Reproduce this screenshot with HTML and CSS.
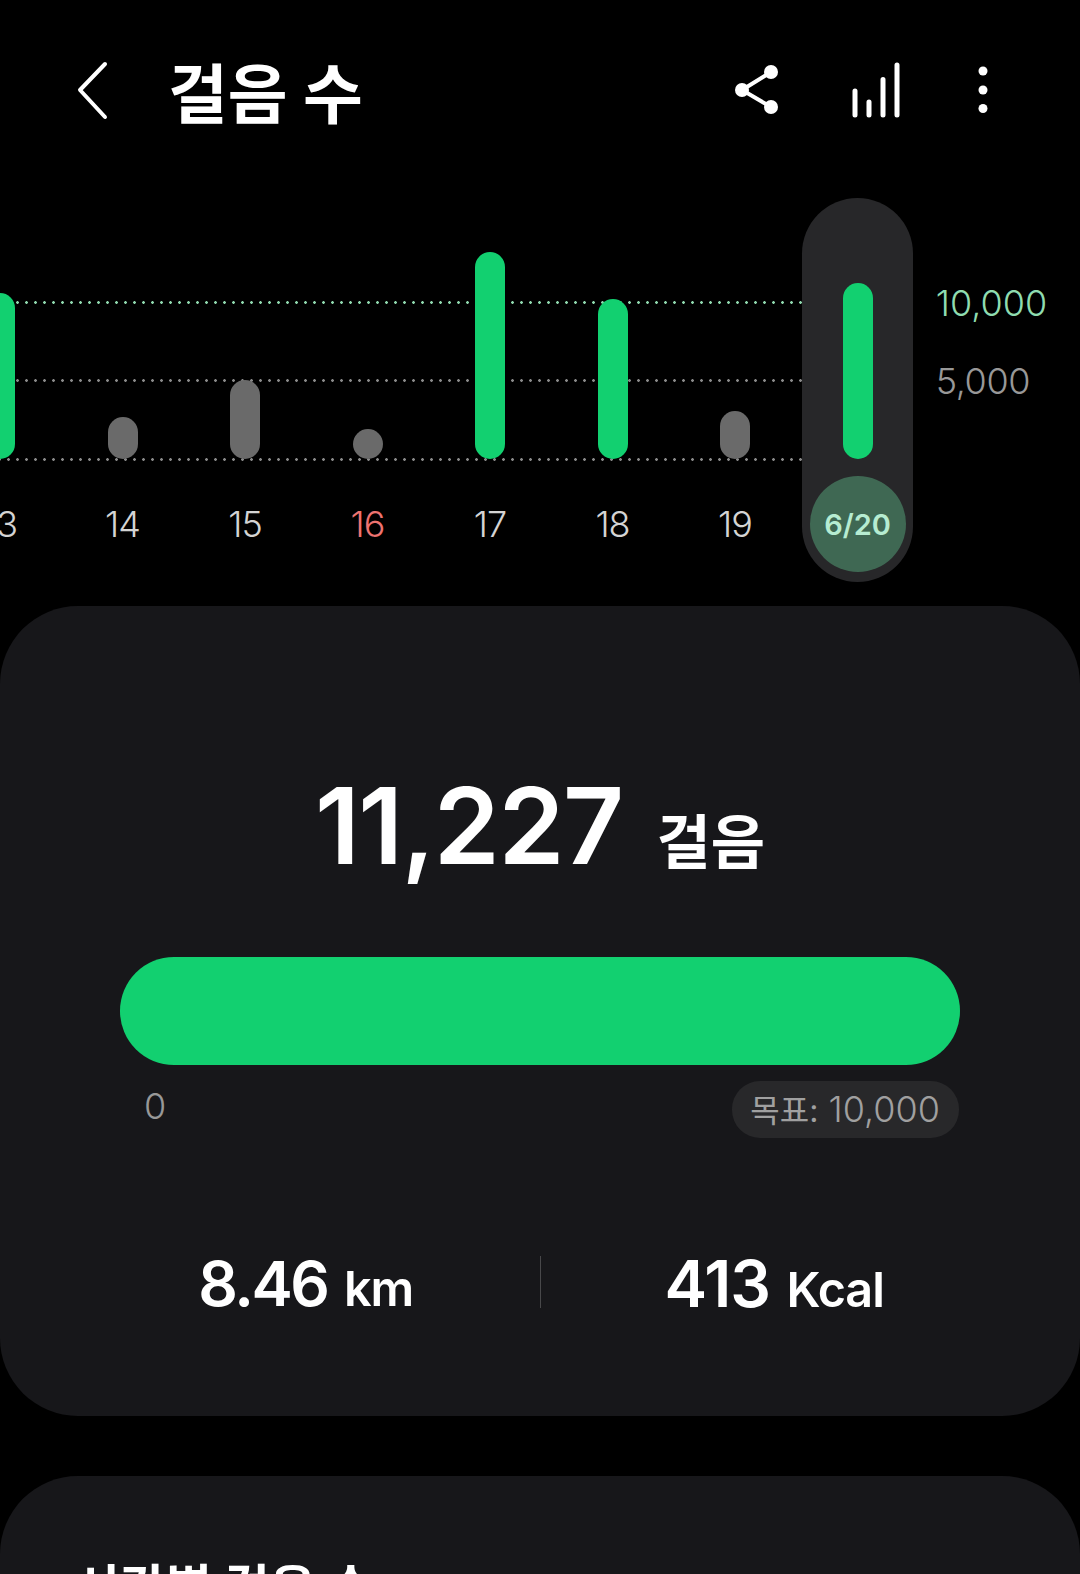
FILE: index.html
```html
<html>
    <head>
        <meta charset="utf-8">
        <title>걸음 수</title>
        <link rel="stylesheet" href="styles.css">
    </head>
    <body>
        <!-- 상단 바 -->
        <div class="top-bar">
            <svg class="icon-back" width="40" height="70" viewBox="0 0 40 70">
                <path d="M31 9 L6 35 L31 62" fill="none" stroke="#fff" stroke-width="4" stroke-linecap="round" stroke-linejoin="round"/>
            </svg>
            <h1 class="title">걸음 수</h1>
            <div class="actions">
                <svg width="48" height="56" viewBox="0 0 48 56">
                    <path d="M37 10 L8 28 L37 45" fill="none" stroke="#fff" stroke-width="4"/>
                    <circle cx="37" cy="10" r="7" fill="#fff"/>
                    <circle cx="8" cy="28" r="7" fill="#fff"/>
                    <circle cx="37" cy="45" r="7" fill="#fff"/>
                </svg>
                <svg width="50" height="56" viewBox="0 0 50 56">
                    <path d="M4 29 V53 M18 40 V53 M32 17.500 V53 M46 3 V53" fill="none" stroke="#fff" stroke-width="5" stroke-linecap="round"/>
                </svg>
                <svg class="icon-more" width="10" height="56" viewBox="0 0 10 56">
                    <circle cx="5" cy="9" r="4.500" fill="#fff"/>
                    <circle cx="5" cy="28" r="4.500" fill="#fff"/>
                    <circle cx="5" cy="46.500" r="4.500" fill="#fff"/>
                </svg>
            </div>
        </div>

        <!-- 주간 차트 -->
        <div class="chart">
            <div class="grid-line line-goal"></div>
            <div class="grid-line line-mid"></div>
            <div class="grid-line line-base"></div>
            <div class="days">
                <div class="day">
                    <div class="bar-area"><div class="bar bar-green" style="height:166px"></div></div>
                    <div class="day-label">13</div>
                </div>
                <div class="day">
                    <div class="bar-area"><div class="bar bar-gray" style="height:42px"></div></div>
                    <div class="day-label">14</div>
                </div>
                <div class="day">
                    <div class="bar-area"><div class="bar bar-gray" style="height:79px"></div></div>
                    <div class="day-label">15</div>
                </div>
                <div class="day">
                    <div class="bar-area"><div class="bar bar-gray" style="height:30px"></div></div>
                    <div class="day-label sunday">16</div>
                </div>
                <div class="day">
                    <div class="bar-area"><div class="bar bar-green" style="height:207px"></div></div>
                    <div class="day-label">17</div>
                </div>
                <div class="day">
                    <div class="bar-area"><div class="bar bar-green" style="height:160px"></div></div>
                    <div class="day-label">18</div>
                </div>
                <div class="day">
                    <div class="bar-area"><div class="bar bar-gray" style="height:48px"></div></div>
                    <div class="day-label">19</div>
                </div>
                <div class="day day-selected">
                    <div class="bar-area"><div class="bar bar-green" style="height:176px"></div></div>
                    <div class="day-label date-badge">6/20</div>
                </div>
            </div>
            <div class="axis">
                <div class="axis-goal">10,000</div>
                <div class="axis-mid">5,000</div>
            </div>
        </div>

        <!-- 오늘 걸음 카드 -->
        <div class="card card-today">
            <div class="count">
                <span class="count-num">11,227</span>
                <span class="count-unit">걸음</span>
            </div>
            <div class="progress"></div>
            <div class="progress-labels">
                <span class="zero">0</span>
                <span class="goal-pill"><span class="goal-word">목표:</span> 10,000</span>
            </div>
            <div class="stats">
                <div class="stat"><span class="stat-num stat-km">8.46</span> <span class="stat-unit">km</span></div>
                <div class="stat-line"></div>
                <div class="stat"><span class="stat-num">413</span> <span class="stat-unit">Kcal</span></div>
            </div>
        </div>

        <!-- 시간별 카드 -->
        <div class="card card-hourly">
            <h2 class="card-title">시간별 걸음 수</h2>
        </div>
    </body>
</html>
```

FILE: styles.css
```css
*{
    margin: 0;
    padding: 0;
    box-sizing: border-box;
}
html, body{
    width: 1080px;
    height: 1574px;
    overflow: hidden;
}
body{
    background-color: #000;
    color: #fff;
    font-family: Inter, "Noto Sans CJK KR", sans-serif;
}
/* 상단 바 */
.top-bar{
    display: flex;
    align-items: center;
    height: 180px;
    padding: 0 0 0 74px;
}
.icon-back{
    margin-right: 54px;
}
.title{
    font-size: 65px;
    font-weight: 700;
    line-height: 70px;
    margin-top: 10px;
}
.actions{
    display: flex;
    align-items: center;
    gap: 69px;
    margin-left: auto;
    padding-right: 92px;
}
.icon-more{
    margin-left: 8px;
}
/* 차트 */
.chart{
    position: relative;
    isolation: isolate;
    display: flex;
    padding: 18px 0 24px;
}
.grid-line{
    position: absolute;
    left: 0;
    width: 802px;
    height: 3px;
    z-index: -1;
    background-image: radial-gradient(circle at center, #8a8a8a 1.100px, transparent 1.600px);
    background-size: 9px 3px;
    background-position: 4px 0;
}
.line-goal{
    top: 121px;
    background-image: radial-gradient(circle at center, #8fd8ae 1.100px, transparent 1.600px);
}
.line-mid{
    top: 199px;
}
.line-base{
    top: 278px;
}
.days{
    display: grid;
    grid-template-columns: repeat(8, 122.500px);
    margin-left: -61.250px;
}
.day{
    display: flex;
    flex-direction: column;
    align-items: center;
    height: 384px;
}
.day-selected{
    width: 111px;
    justify-self: center;
    background-color: #272729;
    border-radius: 56px;
}
.bar-area{
    display: flex;
    align-items: flex-end;
    height: 261px;
}
.bar{
    width: 30px;
    border-radius: 15px;
}
.bar-green{
    background-color: #12d070;
}
.bar-gray{
    background-color: #6a6a6a;
}
.day-label{
    display: flex;
    align-items: center;
    justify-content: center;
    height: 96px;
    margin-top: 17px;
    font-size: 36px;
    font-weight: 300;
    color: #d4d4d4;
    letter-spacing: -1px;
}
.sunday{
    color: #ee7370;
}
.date-badge{
    width: 96px;
    border-radius: 50%;
    background-color: #3f6853;
    color: #b6ecd1;
    font-size: 29px;
    font-weight: 600;
    letter-spacing: 0;
}
.axis{
    padding: 66px 0 0 17px;
    font-size: 36px;
    line-height: 78px;
    font-weight: 300;
}
.axis-goal{
    color: #8fdcb0;
}
.axis-mid{
    color: #989898;
    letter-spacing: -0.400px;
}
/* 카드 */
.card{
    background-color: #17171a;
    border-radius: 78px;
}
.card-today{
    height: 810px;
    padding: 170px 120px 0;
}
.count{
    display: flex;
    align-items: baseline;
    justify-content: center;
    height: 181px;
    line-height: 100px;
    gap: 34px;
}
.count-num{
    font-size: 106px;
    font-weight: 600;
    letter-spacing: -1.500px;
}
.count-unit{
    font-size: 59px;
    font-weight: 700;
}
.progress{
    height: 108px;
    border-radius: 54px;
    background-color: #12d070;
}
.progress-labels{
    display: flex;
    align-items: center;
    justify-content: space-between;
    margin: 16px 1px 0 0;
}
.zero{
    margin: 0 0 8px 24px;
    font-size: 36px;
    font-weight: 300;
    color: #989898;
}
.goal-pill{
    height: 57px;
    line-height: 57px;
    padding: 0 19px 0 18px;
    border-radius: 28px;
    background-color: #28282a;
    font-size: 36px;
    font-weight: 300;
    color: #a0a0a0;
}
.goal-word{
    font-size: 32px;
    font-weight: 400;
}
.stats{
    display: grid;
    grid-template-columns: 1fr 1px 1fr;
    align-items: start;
    margin: 118px -48px 0;
}
.stat{
    margin-top: 2px;
    text-align: center;
    line-height: 52px;
    white-space: nowrap;
}
.stat-num{
    font-size: 64px;
    font-weight: 600;
    letter-spacing: -1px;
}
.stat-km{
    font-size: 62px;
    letter-spacing: -2.500px;
}
.stat-unit{
    font-size: 48.500px;
    font-weight: 600;
    letter-spacing: -1px;
    margin-left: 12px;
}
.stat-line{
    height: 52px;
    background-color: #48484a;
}
.card-hourly{
    height: 300px;
    margin-top: 60px;
    padding: 82px 0 0 74px;
}
.card-title{
    font-size: 50px;
    font-weight: 700;
    line-height: 60px;
}
```
